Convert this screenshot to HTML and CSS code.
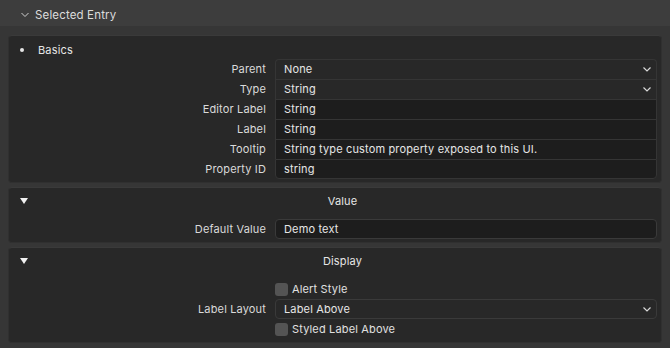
FILE: index.html
```html
<!DOCTYPE html>
<html lang="en">
<head>
    <meta charset="UTF-8">
    <title>Selected Entry</title>
    <link rel="stylesheet" href="styles.css">
</head>
<body>
    <div class="top-header">
        <svg class="chevron" width="8" height="6" viewBox="0 0 8 6"><path d="M0.5 1 L4 4.5 L7.5 1" fill="none" stroke="#cfcfcf" stroke-width="1"/></svg>
        <span>Selected Entry</span>
    </div>
    <div class="panels">
        <div class="panel basics">
            <div class="panel-head">
                <span class="bullet"></span>
                <span class="sub-title">Basics</span>
            </div>
            <div class="rows group">
                <div class="label">Parent</div>
                <div class="field dropdown first">None<svg class="arrow" width="8" height="5" viewBox="0 0 8 5"><path d="M0.5 0.5 L4 4 L7.5 0.5" fill="none" stroke="#d8d8d8" stroke-width="1.2"/></svg></div>
                <div class="label">Type</div>
                <div class="field dropdown">String<svg class="arrow" width="8" height="5" viewBox="0 0 8 5"><path d="M0.5 0.5 L4 4 L7.5 0.5" fill="none" stroke="#d8d8d8" stroke-width="1.2"/></svg></div>
                <div class="label">Editor Label</div>
                <div class="field">String</div>
                <div class="label">Label</div>
                <div class="field">String</div>
                <div class="label">Tooltip</div>
                <div class="field">String type custom property exposed to this UI.</div>
                <div class="label">Property ID</div>
                <div class="field last">string</div>
            </div>
        </div>
        <div class="panel">
            <div class="panel-head">
                <span class="triangle"></span>
                <span class="title">Value</span>
            </div>
            <div class="rows">
                <div class="label">Default Value</div>
                <div class="field single">Demo text</div>
            </div>
        </div>
        <div class="panel">
            <div class="panel-head">
                <span class="triangle"></span>
                <span class="title">Display</span>
            </div>
            <div class="rows">
                <div></div>
                <label class="check"><span class="box"></span>Alert Style</label>
                <div class="label">Label Layout</div>
                <div class="field dropdown single">Label Above<svg class="arrow" width="8" height="5" viewBox="0 0 8 5"><path d="M0.5 0.5 L4 4 L7.5 0.5" fill="none" stroke="#d8d8d8" stroke-width="1.2"/></svg></div>
                <div></div>
                <label class="check"><span class="box"></span>Styled Label Above</label>
            </div>
        </div>
    </div>
</body>
</html>
```

FILE: styles.css
```css
body {
    margin: 0;
    width: 670px;
    height: 348px;
    overflow: hidden;
    background-color: #363636;
    font-family: Inter, "Noto Sans", sans-serif;
    font-size: 11px;
    letter-spacing: 0.15px;
    color: #e0e0e0;
}
.top-header {
    box-sizing: border-box;
    height: 26px;
    padding-top: 3px;
    background-color: #3d3d3d;
    display: flex;
    align-items: center;
    padding-left: 21px;
    gap: 6px;
    font-size: 11.5px;
    color: #dcdcdc;
}
.panels {
    display: flex;
    flex-direction: column;
    gap: 4px;
    padding: 9px 8px 0 8px;
}
.panel {
    background-color: #282828;
    border: 1px solid #303030;
    border-top-color: #3a3a3a;
    border-radius: 4px;
    padding: 0 4px 3px 0;
}
.panel-head {
    height: 26px;
    display: flex;
    align-items: center;
    padding-left: 11px;
}
.basics .panel-head {
    height: 19px;
    padding-top: 4px;
}
.bullet {
    width: 4px;
    height: 4px;
    border-radius: 50%;
    background-color: #e6e6e6;
}
.sub-title {
    margin-left: 14px;
    color: #e6e6e6;
}
.triangle {
    width: 0;
    height: 0;
    border-left: 4px solid transparent;
    border-right: 4px solid transparent;
    border-top: 6px solid #f0f0f0;
}
.title {
    flex: 1;
    text-align: center;
    color: #e6e6e6;
}
.rows {
    display: grid;
    grid-template-columns: 257px 1fr;
    grid-auto-rows: 20px;
    column-gap: 9px;
    margin-top: 5px;
}
.basics .rows {
    margin-top: 0;
}
.label {
    text-align: right;
    line-height: 20px;
    color: #dadada;
}
.field {
    position: relative;
    box-sizing: border-box;
    height: 20px;
    background-color: #1d1d1d;
    border: 1px solid #353535;
    border-bottom: none;
    line-height: 19px;
    padding-left: 8px;
    color: #e6e6e6;
}
.field.dropdown {
    background-color: #282828;
}
.field.first {
    border-radius: 4px 4px 0 0;
}
.field.last {
    border-bottom: 1px solid #353535;
    border-radius: 0 0 4px 4px;
    line-height: 18px;
}
.field.single {
    border: 1px solid #3a3a3a;
    border-radius: 4px;
    line-height: 18px;
}
.arrow {
    position: absolute;
    right: 5px;
    top: 7px;
}
.check {
    display: flex;
    align-items: center;
    gap: 4px;
    color: #e0e0e0;
}
.box {
    width: 13px;
    height: 13px;
    border-radius: 3px;
    background-color: #545454;
}
```
